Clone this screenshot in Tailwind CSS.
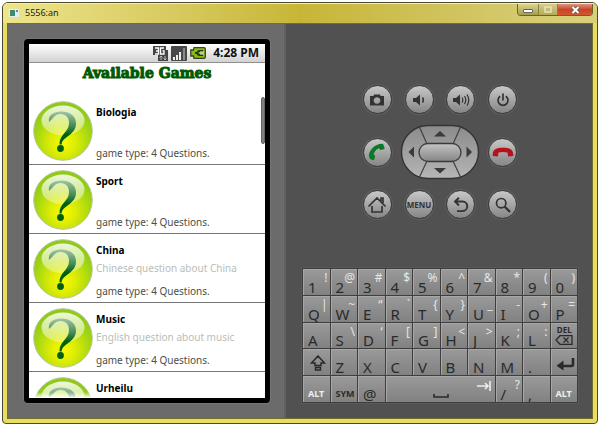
<!DOCTYPE html>
<html lang="en">
<head>
<meta charset="utf-8">
<title>5556:an</title>
<script src="https://cdn.jsdelivr.net/npm/@tailwindcss/browser@4"></script>
</head>
<body class="h-screen bg-white p-0.5 font-['Noto_Sans','Open_Sans',sans-serif] overflow-hidden">
<svg class="absolute w-0 h-0" aria-hidden="true">
  <defs>
    <radialGradient id="ball" cx=".5" cy=".7" r=".62"><stop offset="0" stop-color="#fbfb00"/><stop offset=".35" stop-color="#dcec05"/><stop offset=".8" stop-color="#9fd414"/><stop offset="1" stop-color="#8fcb12"/></radialGradient>
    <linearGradient id="gloss" x2="0" y2="1"><stop offset="0" stop-color="#fff" stop-opacity=".85"/><stop offset="1" stop-color="#fff" stop-opacity=".3"/></linearGradient>
    <linearGradient id="mark" x2="0" y2="1"><stop offset="0" stop-color="#a3c4a6"/><stop offset=".45" stop-color="#3f8a55"/><stop offset=".7" stop-color="#006010"/></linearGradient>
    <linearGradient id="pad" x2="0" y2="1"><stop offset="0" stop-color="#8b8b8b"/><stop offset="1" stop-color="#b5b5b5"/></linearGradient>
    <linearGradient id="pill" x2="0" y2="1"><stop offset="0" stop-color="#c4c4c4"/><stop offset="1" stop-color="#858585"/></linearGradient>
    <symbol id="question" viewBox="0 0 60 60">
      <circle cx="30" cy="30" r="29.3" fill="url(#ball)" stroke="#b9c4a4" stroke-width="1"/>
      <ellipse cx="30" cy="19.500" rx="21.500" ry="15" fill="url(#gloss)"/>
      <path d="M16 21c-1.500-7 5-10.500 12-10.500 9 0 15 4.500 15 12 0 12-14 13-14.300 21h-2.200c-.5-10 9.500-12 9.500-21.500 0-5.500-3-9-8.500-9-6 0-6.500 4-11.500 8z" fill="url(#mark)"/>
      <circle cx="27.500" cy="47.500" r="3.400" fill="#006010"/>
    </symbol>
  </defs>
</svg>
<main class="h-full flex flex-col rounded-t-md rounded-b-sm border border-[#4a4a30] bg-[#e9dc60] overflow-hidden">
  <header class="h-5 shrink-0 flex items-start justify-between pl-1.5 pr-1 border-t border-[#f6f0b0] bg-linear-to-r from-[#eee58c] via-[#c7b636] to-[#d9d07c]">
    <h1 class="flex items-center gap-1.5 h-[18px] text-[9px] text-[#222]">
      <svg class="w-2.5 h-2" viewBox="0 0 10 8" aria-hidden="true"><path d="M0 0h10v8H0z" fill="#e6eef2"/><path d="M1 1h5v6H1z" fill="#3c8a78"/><path d="M7 1h2v2H7z" fill="#5a86b8"/></svg>
      <span>5556:an</span>
    </h1>
    <div class="flex h-3 rounded-b-sm border border-t-0 border-[#6b6230] overflow-hidden">
      <button aria-label="Minimize" class="w-5 flex items-center justify-center bg-linear-to-b from-[#dcd591] to-[#a79c44]"><svg class="w-[10px] h-[10px]" viewBox="0 0 10 10"><rect x=".5" y="4.500" width="9" height="3" rx=".5" fill="#fff" stroke="#666"/></svg></button>
      <button aria-label="Maximize" class="w-5 flex items-center justify-center border-x border-[#8a8040] bg-linear-to-b from-[#d5ce8a] to-[#b3a956]"><svg class="w-2 h-[7px]" viewBox="0 0 8 7"><path d="M1 1h6v5H1z" fill="none" stroke="#e8e4bf" stroke-width="1.500"/></svg></button>
      <button aria-label="Close" class="w-[34px] flex items-center justify-center bg-linear-to-b from-[#dc9380] via-[#c8452a] to-[#d4562e]"><svg class="w-[9px] h-2" viewBox="0 0 9 8"><path d="M1.500 1l6 6M7.500 1l-6 6" stroke="#555" stroke-width="3.400"/><path d="M1.500 1l6 6M7.500 1l-6 6" stroke="#fff" stroke-width="2"/></svg></button>
    </div>
  </header>

  <div class="flex-1 min-h-0 mx-1 mb-1 border border-[#72702f] grid grid-cols-[278fr_306fr] bg-[#515151]">
    <section aria-label="Device screen" class="min-h-0 pt-[15px] pl-4 pr-[14px] pb-[15px] bg-[#6b6b6b] border-r-2 border-[#606060]">
      <div class="relative h-full flex flex-col rounded border-[5px] border-black ring-1 ring-[#818181]/50 bg-white overflow-hidden">
        <div class="h-[19px] shrink-0 flex items-center justify-end gap-[3px] pr-1.5 border-b border-[#8f8f8f] bg-linear-to-b from-white to-[#d2d2d2] text-[12px] font-bold text-[#111]">
          <svg class="w-[15px] h-[15px]" viewBox="0 0 15 15" role="img" aria-label="3G"><path d="M0 0h13v4h2v11H5V9H0z" fill="#454545"/><path d="M2 2h3.500v6H2M3 5h2.500M11 2H7.500v6H11V5H9.500" fill="none" stroke="#fff" stroke-width="1.300"/><path d="M8 14V10M6.500 11.500L8 10l1.500 1.500M12 10v4M10.500 12.500L12 14l1.500-1.500" fill="none" stroke="#bbb"/></svg>
          <svg class="w-4 h-[15px]" viewBox="0 0 16 15" role="img" aria-label="Signal"><rect width="16" height="15" rx="1" fill="#484848"/><path d="M2 11h2v3H2zM5 9h2v5H5zM8 6h2v8H8z" fill="#eee"/><path d="M12 2h2v12h-2z" fill="#8a8a8a"/></svg>
          <svg class="w-[16px] h-3 mr-1" viewBox="0 0 16 12" role="img" aria-label="Battery"><path d="M4 .7h10q1.300 0 1.300 1.300v8q0 1.300-1.300 1.300H4L3.500 9H.8V3h2.700z" fill="#86bd12" stroke="#39431f" stroke-width="1.300"/><path d="M13 4H9.500q-2 0-2 2t2 2H13M8 6H5" fill="none" stroke="#2b3712" stroke-width="1.800"/><path d="M10 5h4M10 7h4" stroke="#eee"/></svg>
          <time>4:28 PM</time>
        </div>
        <h2 class="h-[33px] shrink-0 text-center text-[14px] leading-5 font-black text-[#005a00] font-['DejaVu_Serif',serif] [-webkit-text-stroke:1px_#005a00]">Available Games</h2>
        <ul class="flex-1 min-h-0 overflow-hidden text-[10px] leading-3">
          <li class="h-[69px] flex gap-[3px] pt-[5px] pl-1 border-b border-[#777]"><svg class="w-[60px] h-[60px] shrink-0"><use href="#question"/></svg><div class="pt-[5px]"><h3 class="h-4 font-bold text-black">Biologia</h3><p class="h-[25px]"></p><p class="text-[#4a4f4a]">game type: 4 Questions.</p></div></li>
          <li class="h-[69px] flex gap-[3px] pt-[5px] pl-1 border-b border-[#777]"><svg class="w-[60px] h-[60px] shrink-0"><use href="#question"/></svg><div class="pt-[5px]"><h3 class="h-4 font-bold text-black">Sport</h3><p class="h-[25px]"></p><p class="text-[#4a4f4a]">game type: 4 Questions.</p></div></li>
          <li class="h-[69px] flex gap-[3px] pt-[5px] pl-1 border-b border-[#777]"><svg class="w-[60px] h-[60px] shrink-0"><use href="#question"/></svg><div class="pt-[5px]"><h3 class="h-4 font-bold text-black">China</h3><p class="h-[25px] pt-0.5 text-[#b9bdb9]">Chinese question about China</p><p class="text-[#4a4f4a]">game type: 4 Questions.</p></div></li>
          <li class="h-[69px] flex gap-[3px] pt-[5px] pl-1 border-b border-[#777]"><svg class="w-[60px] h-[60px] shrink-0"><use href="#question"/></svg><div class="pt-[5px]"><h3 class="h-4 font-bold text-black">Music</h3><p class="h-[25px] pt-0.5 text-[#b9bdb9]">English question about music</p><p class="text-[#4a4f4a]">game type: 4 Questions.</p></div></li>
          <li class="h-[69px] flex gap-[3px] pt-[5px] pl-1"><svg class="w-[60px] h-[60px] shrink-0"><use href="#question"/></svg><div class="pt-[5px]"><h3 class="h-4 font-bold text-black">Urheilu</h3></div></li>
        </ul>
        <div class="absolute inset-x-0 bottom-0 h-1.5 bg-linear-to-t from-white to-transparent"></div>
        <div class="absolute right-0 top-[53px] w-1 h-[47px] rounded-sm bg-[#808080] border border-[#666]"></div>
      </div>
    </section>

    <section aria-label="Device controls" class="min-h-0 flex flex-col justify-between pt-[61px] pl-4 pr-[14px] pb-[15px]">
      <div class="mx-auto w-[154px] grid grid-cols-4 gap-x-[13px] gap-y-3 justify-items-center text-[#333] [&>button]:size-[29px] [&>button]:rounded-full [&>button]:border [&>button]:border-[#3c3c3c] [&>button]:ring-1 [&>button]:ring-[#686868]/60 [&>button]:bg-linear-to-b [&>button]:from-[#c8c8c8] [&>button]:to-[#868686] [&>button]:flex [&>button]:items-center [&>button]:justify-center">
        <button aria-label="Camera"><svg class="w-4 h-3 shrink-0" viewBox="0 0 16 12"><path fill-rule="evenodd" d="M1 2h3.500L5 .5h6l.5 1.500H15v9.500H1zM8 3.200a3.300 3.300 0 1 0 .01 0z" fill="#333"/></svg></button>
        <button aria-label="Volume down"><svg class="w-[14px] h-3 shrink-0" viewBox="0 0 14 12"><path d="M1 4h3l4-3.500v11L4 8H1z" fill="#333"/><path d="M10.500 3.500q1.800 2.500 0 5" fill="none" stroke="#333" stroke-width="1.500"/></svg></button>
        <button aria-label="Volume up"><svg class="w-[18px] h-3 shrink-0" viewBox="0 0 18 12"><path d="M1 4h3l4-3.500v11L4 8H1z" fill="#333"/><path d="M10 3.500q1.600 2.500 0 5M12.500 2q2.600 4 0 8M15 .5q3.600 5.500 0 11" fill="none" stroke="#333" stroke-width="1.200"/></svg></button>
        <button aria-label="Power"><svg class="w-[14px] h-[14px] shrink-0" viewBox="0 0 14 14"><path d="M4.200 3.200a5 5 0 1 0 5.600 0M7 .5v7" fill="none" stroke="#333" stroke-width="1.700"/></svg></button>

        <button aria-label="Call" class="self-center"><svg class="w-[18px] h-[18px] shrink-0" viewBox="0 0 18 18"><path d="M.8 12C2.500 5.500 7.500 1.200 14 .8l1.200.5 1.500 4-.8.900-3.600.8-1.500-1.800C8.300 6.200 6.300 8.600 5.600 11.300l1.600 1.600-1 3.500-1 .8-3.600-1.400z" fill="#0a7a28"/></svg></button>
        <div class="relative col-span-2 w-20 h-[56px] -my-[2px]">
          <svg class="absolute inset-0 w-full h-full" viewBox="0 0 80 56" aria-hidden="true"><rect x="1.500" y="1.500" width="77" height="53" rx="26.500" fill="url(#pad)" stroke="#343434" stroke-width="1.400"/><path d="M19 2l8 18M61 2l-8 18M19 54l8-17M61 54l-8-17" stroke="#404040" stroke-width="1.200"/><rect x="19" y="19.500" width="42" height="18" rx="9" fill="url(#pill)" stroke="#3a3a3a" stroke-width="1.300"/><path d="M34 12.500h12L40 7zM34 44h12l-6 5.500zM14 22.500v11L8.500 28zM66.500 22.500v11L72 28z" fill="#3a3a3a"/></svg>
          <button aria-label="Up" class="absolute left-7 top-0 w-6 h-[18px]"></button><button aria-label="Down" class="absolute left-7 bottom-0 w-6 h-[18px]"></button><button aria-label="Left" class="absolute left-0 top-[18px] w-[18px] h-5"></button><button aria-label="Right" class="absolute right-0 top-[18px] w-[18px] h-5"></button><button aria-label="Select" class="absolute left-5 top-5 w-10 h-4"></button>
        </div>
        <button aria-label="End call" class="self-center"><svg class="w-[22px] h-[10px] shrink-0" viewBox="0 0 22 10"><path d="M.8 9C.2 2.500 4 .8 11 .8S21.800 2.500 21.200 9l-5 .5L15.500 5.500q-4.500-1-9 0L5.800 9.500z" fill="#b5121c"/></svg></button>

        <button aria-label="Home"><svg class="w-[20px] h-[18px] shrink-0" viewBox="0 0 20 18"><path d="M1.500 10.500L10 2l8.500 8.500M5 10v6h10v-6M14 5V2h2v5" fill="none" stroke="#333" stroke-width="1.700"/></svg></button>
        <button class="text-[8px] font-bold">MENU</button>
        <button aria-label="Back"><svg class="w-[16px] h-[16px] shrink-0" viewBox="0 0 16 16"><path d="M6 .8L2 4.500l4 4M2 4.500h7.500a4.800 4.800 0 0 1 0 9.600H4" fill="none" stroke="#333" stroke-width="1.900"/></svg></button>
        <button aria-label="Search"><svg class="w-[16px] h-[16px] shrink-0" viewBox="0 0 16 16"><circle cx="6.200" cy="6.200" r="4.700" fill="none" stroke="#333" stroke-width="1.700"/><path d="M9.500 9.500l5.500 5.500" stroke="#333" stroke-width="2.300"/></svg></button>
      </div>

      <div class="h-[135px] grid grid-cols-10 grid-rows-5 gap-px p-px bg-[#3e3e3e] ring-1 ring-[#626262]/50 text-[15px] leading-4 text-[#2a2a2a] [&>button]:relative [&>button]:min-w-0 [&>button]:min-h-0 [&>button]:flex [&>button]:items-end [&>button]:pl-1 [&>button]:border-t [&>button]:border-l [&>button]:border-[#a8a8a8] [&>button]:bg-linear-to-b [&>button]:from-[#999] [&>button]:to-[#818181] [&_sup]:absolute [&_sup]:right-0.5 [&_sup]:top-0.5 [&_sup]:text-[12px] [&_sup]:leading-none [&_sup]:text-[#e6e6e6]">
        <button>1<sup>!</sup></button><button>2<sup>@</sup></button><button>3<sup>#</sup></button><button>4<sup>$</sup></button><button>5<sup>%</sup></button><button>6<sup>^</sup></button><button>7<sup>&amp;</sup></button><button>8<sup>*</sup></button><button>9<sup>(</sup></button><button>0<sup>)</sup></button>
        <button>Q<sup>|</sup></button><button>W<sup>~</sup></button><button>E<sup>“</sup></button><button>R<sup>`</sup></button><button>T<sup>{</sup></button><button>Y<sup>}</sup></button><button>U<sup>_</sup></button><button>I<sup>-</sup></button><button>O<sup>+</sup></button><button>P<sup>=</sup></button>
        <button>A</button><button>S<sup>\</sup></button><button>D<sup>‘</sup></button><button>F<sup>[</sup></button><button>G<sup>]</sup></button><button>H<sup>&lt;</sup></button><button>J<sup>&gt;</sup></button><button>K<sup>;</sup></button><button>L<sup>:</sup></button>
        <button class="flex-col justify-center gap-0.5"><span class="self-center text-[8px] leading-[7px] font-bold pr-1">DEL</span><svg class="self-center w-[18px] h-[10px] mr-1" viewBox="0 0 18 10" aria-hidden="true"><path d="M5 .7h12v8.600H5L1 5zM8.500 2.500l5 5M13.500 2.500l-5 5" fill="none" stroke="#2a2a2a" stroke-width="1.300"/></svg></button>
        <button aria-label="Shift"><svg class="w-4 h-4 ml-0.5 mb-1" viewBox="0 0 16 16"><path d="M8 1l6.500 7H11v2.500H5V8H1.500zM5.500 12.500h5V15h-5z" fill="none" stroke="#2a2a2a" stroke-width="1.500"/></svg></button><button>Z</button><button>X</button><button>C</button><button>V</button><button>B</button><button>N</button><button>M</button><button>.</button>
        <button aria-label="Enter"><svg class="w-[19px] h-[14px] mb-1" viewBox="0 0 19 14"><path d="M17 1v6.500q0 1.500-1.500 1.500H5" fill="none" stroke="#2a2a2a" stroke-width="2.600"/><path d="M7.500 3.500v10L.5 8.700z" fill="#2a2a2a"/></svg></button>
        <button class="text-[9px] font-bold text-[#eee]">ALT</button><button class="text-[9px] font-bold">SYM</button><button>@</button>
        <button aria-label="Space" class="col-span-4"><svg class="absolute left-1/2 bottom-1 w-4 h-1 -ml-2" viewBox="0 0 16 4"><path d="M1 0v3h14V0" fill="none" stroke="#2a2a2a" stroke-width="1.600"/></svg><svg class="absolute right-1 top-1 w-[14px] h-[10px]" viewBox="0 0 14 10"><path d="M0 5h11M8 2l3 3-3 3M13 0v10" fill="none" stroke="#eee" stroke-width="1.600"/></svg></button>
        <button>/<sup>?</sup></button><button>,</button><button class="text-[9px] font-bold text-[#eee]">ALT</button>
      </div>
    </section>
  </div>
</main>
</body>
</html>
